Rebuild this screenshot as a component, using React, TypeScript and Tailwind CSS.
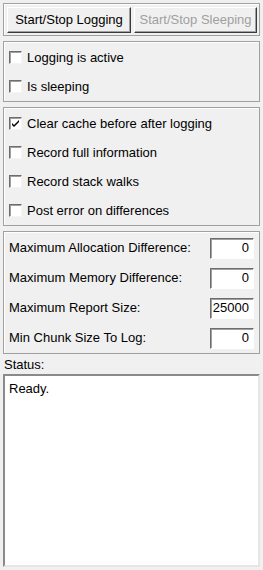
import type { FC, ReactNode } from "react";

const font = { fontFamily: '"Liberation Sans", Arial, sans-serif' };

const Panel: FC<{ className?: string; children: ReactNode }> = ({ className = "", children }) => (
  <div className={`border border-[#a0a0a0] shadow-[inset_1px_1px_0_#ffffff] ${className}`}>{children}</div>
);

const Button: FC<{ label: string; disabled?: boolean; className?: string }> = ({ label, disabled, className = "" }) => (
  <div
    className={`h-[26px] flex items-center justify-center border border-t-white border-l-white border-r-[#3a3a3a] border-b-[#3a3a3a] shadow-[inset_-1px_-1px_0_#a0a0a0] bg-[#f0f0f0] text-[13px] ${
      disabled ? "text-[#a0a0a0]" : "text-black"
    } ${className}`}
  >
    {label}
  </div>
);

const CheckBox: FC<{ checked?: boolean }> = ({ checked }) => (
  <div className="w-[13px] h-[13px] shrink-0 bg-white border border-t-[#6d6d6d] border-l-[#6d6d6d] border-r-[#f4f4f4] border-b-[#f4f4f4] shadow-[inset_1px_1px_0_#a0a0a0] flex items-center justify-center">
    {checked && (
      <svg width="9" height="9" viewBox="0 0 9 9">
        <path d="M1 4 L3 6 L8 1 L8 3 L3 8 L1 6 Z" fill="#000" />
      </svg>
    )}
  </div>
);

const CheckRow: FC<{ label: string; checked?: boolean; h: string }> = ({ label, checked, h }) => (
  <div className={`${h} flex items-center gap-[5px] pl-[5px] text-[13px] text-black`}>
    <CheckBox checked={checked} />
    <span>{label}</span>
  </div>
);

const FieldRow: FC<{ label: string; value: string }> = ({ label, value }) => (
  <div className="h-[30px] flex items-center justify-between pl-[5px] pr-[5px] text-[13px] text-black">
    <span>{label}</span>
    <div className="w-[44px] h-[21px] bg-white border border-t-[#6d6d6d] border-l-[#6d6d6d] border-r-white border-b-white shadow-[inset_1px_1px_0_#a0a0a0] flex items-center justify-end pr-[4px]">
      {value}
    </div>
  </div>
);

export default function App() {
  return (
    <div className="w-[263px] h-[570px] bg-[#f0f0f0] px-[3px] pt-[3px] flex flex-col overflow-hidden" style={font}>
      <Panel className="h-[33px] flex gap-[3px] pl-[3px] pr-[2px] pt-[3px]">
        <Button label="Start/Stop Logging" className="w-[124px]" />
        <Button label="Start/Stop Sleeping" disabled className="w-[123px]" />
      </Panel>

      <Panel className="mt-[5px] h-[61px] pt-[1px]">
        <CheckRow h="h-[29px]" label="Logging is active" />
        <CheckRow h="h-[29px]" label="Is sleeping" />
      </Panel>

      <Panel className="mt-[5px] h-[119px] pt-[1px]">
        <CheckRow h="h-[29px]" label="Clear cache before after logging" checked />
        <CheckRow h="h-[29px]" label="Record full information" />
        <CheckRow h="h-[29px]" label="Record stack walks" />
        <CheckRow h="h-[29px]" label="Post error on differences" />
      </Panel>

      <Panel className="mt-[5px] h-[123px] pt-[1px]">
        <FieldRow label="Maximum Allocation Difference:" value="0" />
        <FieldRow label="Maximum Memory Difference:" value="0" />
        <FieldRow label="Maximum Report Size:" value="25000" />
        <FieldRow label="Min Chunk Size To Log:" value="0" />
      </Panel>

      <div className="h-[20px] pt-[3px] pl-[1px] text-[13px] leading-[16px] text-black">Status:</div>

      <div className="h-[193px] bg-white border-2 border-t-[#8a8a8a] border-l-[#8a8a8a] border-r-[#e6e6e6] border-b-[#e6e6e6] px-[4px] pt-[3px] text-[13px] text-black">
        Ready.
      </div>
    </div>
  );
}
